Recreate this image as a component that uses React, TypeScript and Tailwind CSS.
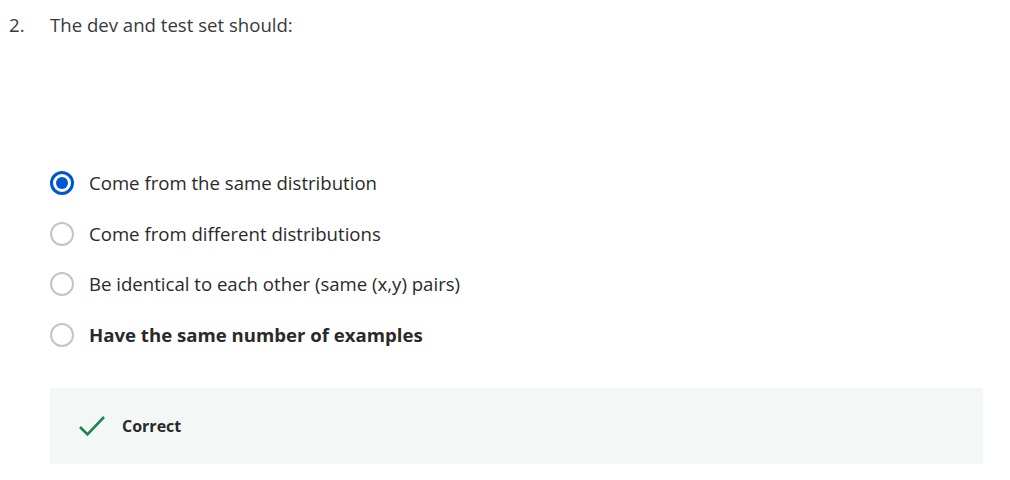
export default function App() {
  const options = [
    { label: "Come from the same distribution", selected: true, bold: false },
    { label: "Come from different distributions", selected: false, bold: false },
    { label: "Be identical to each other (same (x,y) pairs)", selected: false, bold: false },
    { label: "Have the same number of examples", selected: false, bold: true },
  ];

  return (
    <div className="w-[1010px] h-[480px] bg-white text-[#1f1f1f] font-['Open_Sans',sans-serif]">
      {/* Question */}
      <div className="flex pt-[13px] text-[18.6px] leading-6 text-[#373a3c]">
        <span className="w-[50px] pl-[9px]">2.</span>
        <span>The dev and test set should:</span>
      </div>

      {/* Options */}
      <div className="flex flex-col pl-[50px] pt-[134px] gap-[26.6px]">
        {options.map((o, i) => (
          <div key={i} className="flex items-center h-6">
            {o.selected ? (
              <span className="w-6 h-6 rounded-full border-[3px] border-[#0056d2] flex items-center justify-center">
                <span className="w-3 h-3 rounded-full bg-[#0056d2]" />
              </span>
            ) : (
              <span className="w-6 h-6 rounded-full border-2 border-[#c4c4c4]" />
            )}
            <span
              className={`ml-[15px] text-[18.6px] text-[#2a2a2a] ${o.bold ? "font-bold" : ""}`}
            >
              {o.label}
            </span>
          </div>
        ))}
      </div>

      {/* Feedback */}
      <div className="ml-[50px] mt-[41px] w-[933px] h-[76px] bg-[#f3f8f6] flex items-center pl-[28px]">
        <svg width="28" height="24" viewBox="0 0 28 24" fill="none">
          <path d="M2 13 L9.5 20.5 L26 3" stroke="#1f8354" strokeWidth="2.6" />
        </svg>
        <span className="ml-[16px] text-[16px] font-bold text-[#2a2a2a]">Correct</span>
      </div>
    </div>
  );
}
